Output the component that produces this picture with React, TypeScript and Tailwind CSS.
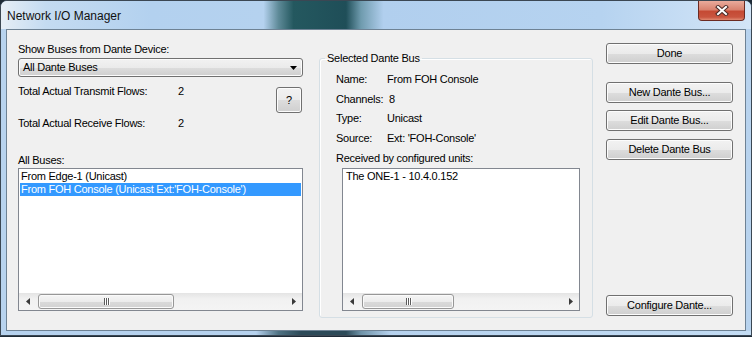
import React from "react";

const btn =
  "flex items-center justify-center rounded-[3px] border border-[#707070] bg-[linear-gradient(to_bottom,#f2f2f2_0%,#ebebeb_50%,#dddddd_51%,#cfcfcf_100%)] shadow-[inset_0_0_0_1px_#fcfcfc] text-black";

function Grip() {
  return (
    <div className="flex gap-[1px]">
      <div className="h-[7px] w-[1px] bg-[#5b5b5b] shadow-[1px_0_0_#ffffff]" />
      <div className="h-[7px] w-[1px] bg-[#5b5b5b] shadow-[1px_0_0_#ffffff]" />
      <div className="h-[7px] w-[1px] bg-[#5b5b5b] shadow-[1px_0_0_#ffffff]" />
    </div>
  );
}

function HScroll({ thumb }: { thumb: string }) {
  return (
    <div className="flex h-[17px] items-center bg-[linear-gradient(to_bottom,#e4e4e4,#f1f1f1_35%,#f4f4f4)]">
      <div className="flex h-full w-[17px] items-center justify-center">
        <svg width="4" height="7" viewBox="0 0 4 7">
          <polygon points="4,0 0,3.5 4,7" fill="#3a3a3a" />
        </svg>
      </div>
      <div
        className={`ml-[2px] flex h-[15px] items-center justify-center rounded-[3px] border border-[#979797] bg-[linear-gradient(to_bottom,#f5f5f5_0%,#ececec_50%,#dadada_51%,#d2d2d2_100%)] shadow-[inset_0_0_0_1px_#fafafa] ${thumb}`}
      >
        <Grip />
      </div>
      <div className="flex-1" />
      <div className="flex h-full w-[17px] items-center justify-center">
        <svg width="4" height="7" viewBox="0 0 4 7">
          <polygon points="0,0 4,3.5 0,7" fill="#3a3a3a" />
        </svg>
      </div>
    </div>
  );
}

export default function App() {
  return (
    <div className="h-[337px] w-[752px] overflow-hidden bg-[#1d2a36] font-['Liberation_Sans',Arial,sans-serif] text-[11px] leading-[13px] tracking-[-0.25px] text-black">
      {/* WINDOW */}
      <div className="relative flex h-[336px] w-[752px] flex-col rounded-t-[7px] border border-[#3b4753] bg-[#b8d3ee]">
        {/* TITLE BAR */}
        <div className="flex h-[28px] items-center rounded-t-[6px] bg-[linear-gradient(to_right,#e6eef6_0%,#c4dbf1_6%,#b3d1ef_20%,#b5d2ef_35%,#5e8a98_37%,#24585f_39%,#1f4e58_46%,#6f9bae_48%,#b1cfee_51%,#b6d3f0_80%,#d3e5f7_100%)] pl-[6px] pt-[2px]">
          <span className="text-[12px] leading-[14px] tracking-normal text-[#111]">Network I/O Manager</span>
        </div>

        {/* CLOSE */}
        <div className="absolute right-[6px] top-0 flex h-[20px] w-[47px] items-center justify-center rounded-b-[4px] border border-t-0 border-[#6b2a22] bg-[linear-gradient(to_bottom,#e9ab9c_0%,#d98370_45%,#c54a34_55%,#c9553f_85%,#e08a72_100%)]">
          <svg width="14" height="11" viewBox="0 0 14 11">
            <path d="M3 2 L11 9 M11 2 L3 9" stroke="#4a2a26" strokeWidth="4" strokeLinecap="square" />
            <path d="M3 2 L11 9 M11 2 L3 9" stroke="#ffffff" strokeWidth="2" strokeLinecap="square" />
          </svg>
        </div>

        {/* CLIENT */}
        <div className="mx-[5px] flex h-[302px] items-start border border-[#6e8294] bg-[#f0f0f0] pl-[11px] pt-[13px]">
          {/* LEFT */}
          <div className="flex w-[285px] flex-col">
            <div>Show Buses from Dante Device:</div>
            <div className="mt-[2px] flex h-[19px] items-center rounded-[3px] border border-[#707070] bg-[linear-gradient(to_bottom,#f2f2f2_0%,#ebebeb_50%,#dddddd_51%,#cfcfcf_100%)] pl-[4px] pr-[5px] shadow-[inset_0_0_0_1px_#fcfcfc]">
              <span className="flex-1">All Dante Buses</span>
              <svg width="7" height="4" viewBox="0 0 7 4">
                <polygon points="0,0 7,0 3.5,4" fill="#000" />
              </svg>
            </div>
            <div className="mt-[8px] flex items-start">
              <div className="flex flex-1 flex-col">
                <div className="flex">
                  <span className="w-[160px]">Total Actual Transmit Flows:</span>
                  <span>2</span>
                </div>
                <div className="mt-[19px] flex">
                  <span className="w-[160px]">Total Actual Receive Flows:</span>
                  <span>2</span>
                </div>
              </div>
              <div className={`${btn} mr-[1px] mt-[2px] h-[26px] w-[26px]`}>?</div>
            </div>
            <div className="mt-[24px]">All Buses:</div>
            <div className="mt-[1px] flex h-[143px] flex-col border border-[#828790] bg-white">
              <div className="flex-1 px-[1px] pt-[1px]">
                <div className="h-[13px] px-[1px]">From Edge-1 (Unicast)</div>
                <div className="h-[13px] bg-[#3399ff] px-[1px] text-white">
                  From FOH Console (Unicast Ext:'FOH-Console')
                </div>
              </div>
              <HScroll thumb="w-[136px]" />
            </div>
          </div>

          {/* MIDDLE GROUP */}
          <fieldset className="ml-[16px] mt-[9px] w-[274px] rounded-[3px] border border-[#d5dfe5] px-0 shadow-[inset_1px_1px_0_#ffffff]">
            <legend className="ml-[5px] px-[2px] leading-[12px]">Selected Dante Bus</legend>
            <div className="flex flex-col pb-[6px] pl-[16px] pt-[9px]">
              <div className="grid grid-cols-[51px_1fr]">
                <span>Name:</span>
                <span>From FOH Console</span>
              </div>
              <div className="mt-[7px] grid grid-cols-[51px_1fr]">
                <span>Channels:</span>
                <span className="pl-[2px]">8</span>
              </div>
              <div className="mt-[6px] grid grid-cols-[51px_1fr]">
                <span>Type:</span>
                <span>Unicast</span>
              </div>
              <div className="mt-[7px] grid grid-cols-[51px_1fr]">
                <span>Source:</span>
                <span>Ext: 'FOH-Console'</span>
              </div>
              <div className="mt-[7px]">Received by configured units:</div>
              <div className="ml-[6px] mt-[3px] flex h-[143px] w-[238px] flex-col border border-[#828790] bg-white">
                <div className="flex-1 pl-[3px] pt-[1px]">
                  <div className="h-[13px]">The ONE-1 - 10.4.0.152</div>
                </div>
                <HScroll thumb="w-[92px]" />
              </div>
            </div>
          </fieldset>

          {/* RIGHT BUTTONS */}
          <div className="ml-[13px] flex w-[127px] flex-col">
            <div className={`${btn} h-[21px]`}>Done</div>
            <div className={`${btn} mt-[18px] h-[21px]`}>New Dante Bus...</div>
            <div className={`${btn} mt-[7px] h-[21px]`}>Edit Dante Bus...</div>
            <div className={`${btn} mt-[8px] h-[21px]`}>Delete Dante Bus</div>
            <div className={`${btn} mt-[135px] h-[21px]`}>Configure Dante...</div>
          </div>
        </div>

        {/* BOTTOM FRAME */}
        <div className="flex-1 bg-[linear-gradient(to_right,#b6d2ee_0%,#b6d2ee_34%,#4f7283_37%,#2c4a58_40%,#2c4a58_46%,#6f93a8_48%,#b6d2ee_52%,#c3dcf3_100%)]" />
      </div>
    </div>
  );
}
